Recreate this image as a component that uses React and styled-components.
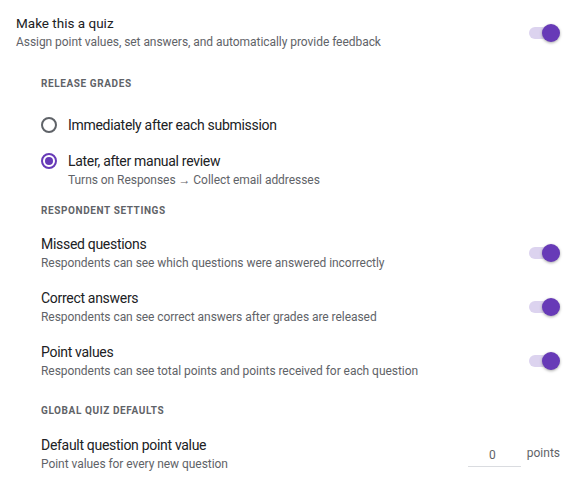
import styled, { createGlobalStyle } from "styled-components";

const GlobalStyle = createGlobalStyle`
  body {
    margin: 0;
    background: #ffffff;
    font-family: Roboto, "Liberation Sans", Arial, sans-serif;
  }
`;

const Page = styled.div`
  width: 584px;
  box-sizing: border-box;
  padding: 14px 24px 0 16px;
`;

const Row = styled.div`
  display: flex;
  justify-content: space-between;
  align-items: center;
  margin-top: ${(p) => p.$gap || 0}px;
`;

const Texts = styled.div`
  display: flex;
  flex-direction: column;
`;

const Title = styled.div`
  font-size: 14px;
  line-height: 20px;
  letter-spacing: -0.3px;
  color: #202124;
`;

const MainTitle = styled.div`
  font-size: 13.5px;
  line-height: 18px;
  color: #202124;
`;

const Sub = styled.div`
  font-size: 12px;
  line-height: 18px;
  letter-spacing: -0.05px;
  color: #5f6368;
  margin-top: ${(p) => p.$gap || 0}px;
`;

const Indent = styled.div`
  padding-left: 25px;
`;

const Heading = styled.div`
  font-size: 10px;
  line-height: 16px;
  font-weight: 700;
  letter-spacing: 0.6px;
  color: #5f6368;
  margin-top: ${(p) => p.$gap}px;
`;

const RadioRow = styled.div`
  display: flex;
  align-items: flex-start;
  gap: 11px;
  margin-top: ${(p) => p.$gap}px;
`;

const RadioCircle = styled.span`
  width: 16px;
  height: 16px;
  margin-top: 2px;
  box-sizing: border-box;
  border-radius: 50%;
  border: 2px solid ${(p) => (p.$on ? "#673ab7" : "#5f6368")};
  display: flex;
  align-items: center;
  justify-content: center;
  flex-shrink: 0;

  &::after {
    content: "";
    width: 8px;
    height: 8px;
    border-radius: 50%;
    background: #673ab7;
    display: ${(p) => (p.$on ? "block" : "none")};
  }
`;

const RadioSub = styled(Sub)`
  line-height: 16px;
  margin-top: 1px;
`;

const Switch = styled.span`
  position: relative;
  width: 31px;
  height: 18px;
  flex-shrink: 0;

  &::before {
    content: "";
    position: absolute;
    left: 0;
    top: 3px;
    width: 29px;
    height: 12px;
    border-radius: 6px;
    background: #dcd3ef;
  }

  &::after {
    content: "";
    position: absolute;
    right: 0;
    top: 0;
    width: 18px;
    height: 18px;
    border-radius: 50%;
    background: #673ab7;
    box-shadow: 0 1px 3px rgba(0, 0, 0, 0.35);
  }
`;

const PointsBox = styled.div`
  display: flex;
  align-items: center;
  gap: 6px;
`;

const PointsInput = styled.div`
  width: 49px;
  height: 24px;
  box-sizing: content-box;
  padding-right: 4px;
  border-bottom: 1px solid #dadce0;
  text-align: center;
  font-size: 12px;
  line-height: 26px;
  color: #5f6368;
`;

const Unit = styled.span`
  font-size: 12px;
  line-height: 18px;
  color: #5f6368;
  margin-bottom: 2px;
`;

const toggles = [
  ["Missed questions", "Respondents can see which questions were answered incorrectly"],
  ["Correct answers", "Respondents can see correct answers after grades are released"],
  ["Point values", "Respondents can see total points and points received for each question"],
];

export default function App() {
  return (
    <Page>
      <GlobalStyle />
      <Row>
        <Texts>
          <MainTitle>Make this a quiz</MainTitle>
          <Sub $gap={1}>Assign point values, set answers, and automatically provide feedback</Sub>
        </Texts>
        <Switch />
      </Row>

      <Indent>
        <Heading $gap={25}>RELEASE GRADES</Heading>
        <RadioRow $gap={23}>
          <RadioCircle />
          <Title>Immediately after each submission</Title>
        </RadioRow>
        <RadioRow $gap={16}>
          <RadioCircle $on />
          <Texts>
            <Title>Later, after manual review</Title>
            <RadioSub>Turns on Responses → Collect email addresses</RadioSub>
          </Texts>
        </RadioRow>

        <Heading $gap={15}>RESPONDENT SETTINGS</Heading>
        {toggles.map(([t, s], i) => (
          <Row key={t} $gap={i === 0 ? 15 : 16}>
            <Texts>
              <Title>{t}</Title>
              <Sub>{s}</Sub>
            </Texts>
            <Switch />
          </Row>
        ))}

        <Heading $gap={23}>GLOBAL QUIZ DEFAULTS</Heading>
        <Row $gap={16}>
          <Texts>
            <Title>Default question point value</Title>
            <Sub>Point values for every new question</Sub>
          </Texts>
          <PointsBox>
            <PointsInput>0</PointsInput>
            <Unit>points</Unit>
          </PointsBox>
        </Row>
      </Indent>
    </Page>
  );
}
